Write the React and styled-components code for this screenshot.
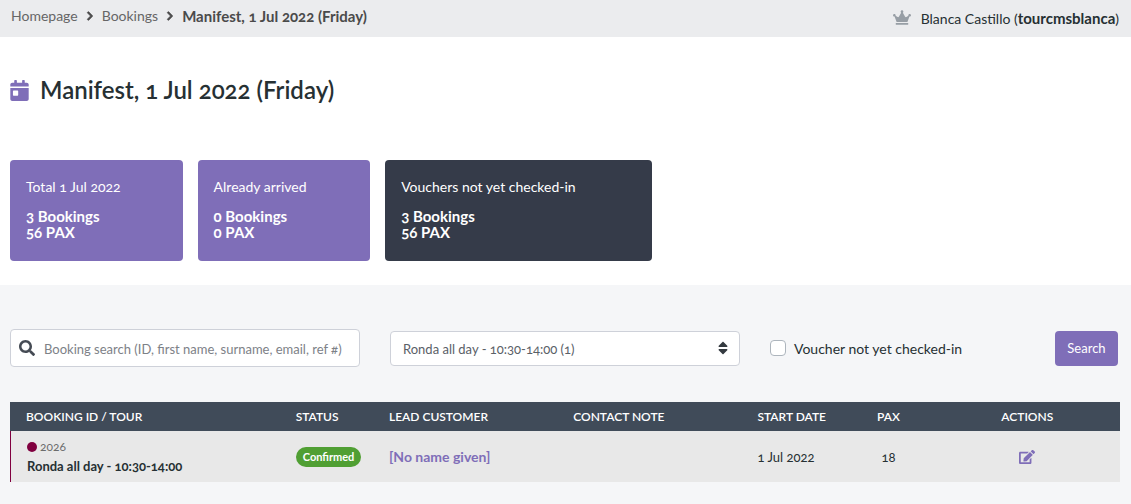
import { useState } from "react";
import styled, { createGlobalStyle } from "styled-components";
import {
  FaCalendarDay,
  FaChevronRight,
  FaCrown,
  FaEdit,
  FaSearch,
  FaSort
} from "react-icons/fa";

const stats = [
  { title: "Total 1 Jul 2022", bookings: 3, pax: 56 },
  { title: "Already arrived", bookings: 0, pax: 0 },
  { title: "Vouchers not yet checked-in", bookings: 3, pax: 56, dark: true }
];

const bookings = [
  {
    id: "2026",
    tour: "Ronda all day - 10:30-14:00",
    status: "Confirmed",
    customer: "[No name given]",
    note: "",
    date: "1 Jul 2022",
    pax: 18
  }
];

function App() {
  const [search, setSearch] = useState("");
  const [notCheckedIn, setNotCheckedIn] = useState(false);

  return (
    <>
      <GlobalStyle />
      <TopBar>
        <Breadcrumbs aria-label="Breadcrumb">
          <a href="#home">Homepage</a>
          <FaChevronRight />
          <a href="#bookings">Bookings</a>
          <FaChevronRight />
          <strong>Manifest, 1 Jul 2022 (Friday)</strong>
        </Breadcrumbs>
        <User>
          <FaCrown />
          <span>
            Blanca Castillo (<strong>tourcmsblanca</strong>)
          </span>
        </User>
      </TopBar>

      <Summary>
        <Title>
          <FaCalendarDay />
          Manifest, 1 Jul 2022 (Friday)
        </Title>
        <Cards>
          {stats.map(stat => (
            <Card key={stat.title} $dark={stat.dark}>
              <CardTitle>{stat.title}</CardTitle>
              <CardValue>{stat.bookings} Bookings</CardValue>
              <CardValue>{stat.pax} PAX</CardValue>
            </Card>
          ))}
        </Cards>
      </Summary>

      <Main>
        <Filters onSubmit={e => e.preventDefault()}>
          <SearchBox>
            <FaSearch />
            <SearchInput
              type="text"
              aria-label="Booking search"
              placeholder="Booking search (ID, first name, surname, email, ref #)"
              value={search}
              onChange={e => setSearch(e.target.value)}
            />
          </SearchBox>
          <SelectBox>
            <Select aria-label="Tour">
              <option>Ronda all day - 10:30-14:00 (1)</option>
            </Select>
            <FaSort />
          </SelectBox>
          <FilterEnd>
            <CheckLabel>
              <Checkbox
                type="checkbox"
                checked={notCheckedIn}
                onChange={e => setNotCheckedIn(e.target.checked)}
              />
              Voucher not yet checked-in
            </CheckLabel>
            <Button type="submit">Search</Button>
          </FilterEnd>
        </Filters>

        <Table>
          <thead>
            <tr>
              <Th $width="24.3%">Booking ID / Tour</Th>
              <Th $width="8.4%">Status</Th>
              <Th $width="16.6%">Lead customer</Th>
              <Th $width="16.6%">Contact note</Th>
              <Th $width="9.1%">Start date</Th>
              <Th $width="8.3%" $center>
                PAX
              </Th>
              <Th $center>Actions</Th>
            </tr>
          </thead>
          <tbody>
            {bookings.map(booking => (
              <tr key={booking.id}>
                <Td $marked>
                  <BookingId>
                    <Dot />
                    {booking.id}
                  </BookingId>
                  <Tour>{booking.tour}</Tour>
                </Td>
                <Td>
                  <Badge>{booking.status}</Badge>
                </Td>
                <Td>
                  <Customer href="#customer">{booking.customer}</Customer>
                </Td>
                <Td>{booking.note}</Td>
                <Td>{booking.date}</Td>
                <Td $center>{booking.pax}</Td>
                <Td $center>
                  <EditButton type="button" aria-label="Edit booking">
                    <FaEdit />
                  </EditButton>
                </Td>
              </tr>
            ))}
          </tbody>
        </Table>
      </Main>
    </>
  );
}

export default App;

const GlobalStyle = createGlobalStyle`
  * {
    box-sizing: border-box;
  }

  body {
    margin: 0;
    background-color: #f5f6f8;
    color: #263033;
    font-family: Lato, "Open Sans", sans-serif;
    font-size: 14px;
    font-variant-numeric: oldstyle-nums;
  }

  #root {
    min-height: 100vh;
  }

  input,
  select,
  button {
    font: inherit;
  }
`;

const TopBar = styled.header`
  display: flex;
  justify-content: space-between;
  align-items: center;
  height: 37px;
  padding: 0 12px 4px 11px;
  background-color: #ebecee;

  strong {
    font-size: 15px;
  }
`;

const Breadcrumbs = styled.nav`
  display: flex;
  align-items: center;
  gap: 7px;
  padding-bottom: 2px;
  color: #4a4a4a;

  a {
    color: #666;
    text-decoration: none;
  }

  svg {
    width: 10px;
    height: 10px;
    stroke: currentColor;
    stroke-width: 40;
  }
`;

const User = styled.div`
  display: flex;
  align-items: center;
  gap: 10px;
  padding-top: 2px;

  svg {
    width: 18px;
    height: 15px;
    color: #979ea5;
  }
`;

const Summary = styled.section`
  padding: 38px 11px 24px 10px;
  background-color: white;
`;

const Title = styled.h1`
  display: flex;
  align-items: center;
  gap: 11px;
  margin: 0 0 55px;
  font-size: 24px;
  font-weight: 600;
  line-height: 30px;

  svg {
    width: 19px;
    height: 21px;
    color: #7f6eb8;
  }
`;

const Cards = styled.div`
  display: flex;
  gap: 15px;
`;

const Card = styled.div`
  width: ${props => (props.$dark ? "24%" : "15.55%")};
  padding: 17px 15px 21px 16px;
  border-radius: 4px;
  background-color: ${props => (props.$dark ? "#353b49" : "#7f6eb8")};
  color: white;
`;

const CardTitle = styled.h2`
  margin: 0 0 11px;
  font-size: 14px;
  font-weight: 400;
  line-height: 20px;
`;

const CardValue = styled.div`
  font-size: 15px;
  font-weight: 700;
  line-height: 16px;
`;

const Main = styled.main`
  padding: 44px 11px 20px 10px;
`;

const Filters = styled.form`
  display: grid;
  grid-template-columns: repeat(3, 1fr);
  align-items: center;
  gap: 30px;
  margin-bottom: 35px;
`;

const SearchBox = styled.label`
  display: flex;
  align-items: center;
  gap: 9px;
  height: 38px;
  padding: 0 8px;
  border: 1px solid #ced1d9;
  border-radius: 4px;
  background-color: white;

  svg {
    flex: none;
    width: 16px;
    height: 16px;
    color: #454b54;
  }
`;

const SearchInput = styled.input`
  flex: 1;
  min-width: 0;
  padding: 2px 0 0;
  border: none;
  outline: 0;
  background: none;
  font-size: 13px;

  &::placeholder {
    color: #7d8187;
  }
`;

const SelectBox = styled.div`
  position: relative;

  svg {
    position: absolute;
    top: 9px;
    right: 12px;
    width: 10px;
    height: 16px;
    color: #343a40;
    pointer-events: none;
  }
`;

const Select = styled.select`
  display: block;
  width: 100%;
  height: 35px;
  padding: 2px 28px 0 12px;
  border: 1px solid #ced1d9;
  border-radius: 4px;
  background-color: white;
  color: #5a6067;
  font-size: 13px;
  appearance: none;
`;

const FilterEnd = styled.div`
  display: flex;
  justify-content: space-between;
  align-items: center;
  padding-right: 2px;
`;

const CheckLabel = styled.label`
  display: flex;
  align-items: center;
  gap: 8px;
  font-size: 14px;
`;

const Checkbox = styled.input`
  width: 16px;
  height: 16px;
  margin: 0;
  border: 1px solid #adb5bd;
  border-radius: 4px;
  background-color: white;
  appearance: none;

  &:checked {
    background-color: #7f6eb8;
  }
`;

const Button = styled.button`
  width: 63px;
  height: 35px;
  padding: 0;
  border: none;
  border-radius: 4px;
  background-color: #7f6eb8;
  color: white;
  font-size: 13px;
`;

const Table = styled.table`
  width: 100%;
  table-layout: fixed;
  border-collapse: separate;
  border-spacing: 0;
`;

const Th = styled.th`
  width: ${props => props.$width || "auto"};
  height: 29px;
  padding: 0 16px;
  background-color: #404b59;
  color: white;
  font-size: 12px;
  font-weight: 600;
  line-height: 20px;
  text-align: ${props => (props.$center ? "center" : "left")};
  text-transform: uppercase;
  white-space: nowrap;
`;

const Td = styled.td`
  height: 51px;
  padding: 0 16px;
  border-left: ${props => (props.$marked ? "1px solid #80003f" : "none")};
  background-color: #e8e8e8;
  font-size: 13px;
  text-align: ${props => (props.$center ? "center" : "left")};
  white-space: nowrap;
`;

const BookingId = styled.div`
  display: flex;
  align-items: center;
  gap: 3px;
  color: #6c6c6c;
  font-size: 12px;
  line-height: 18px;
`;

const Dot = styled.span`
  width: 10px;
  height: 10px;
  border-radius: 50%;
  background-color: #80003f;
`;

const Tour = styled.div`
  font-weight: 700;
  line-height: 20px;
`;

const Badge = styled.span`
  display: inline-block;
  padding: 0 7px;
  border-radius: 10px;
  background-color: #509f33;
  color: white;
  font-size: 11px;
  font-weight: 700;
  line-height: 20px;
`;

const Customer = styled.a`
  color: #7f6eb8;
  font-size: 14px;
  font-weight: 700;
  text-decoration: none;
`;

const EditButton = styled.button`
  padding: 0;
  border: none;
  background: none;
  color: #7f6eb8;
  vertical-align: middle;

  svg {
    display: block;
    width: 16px;
    height: 16px;
  }
`;
